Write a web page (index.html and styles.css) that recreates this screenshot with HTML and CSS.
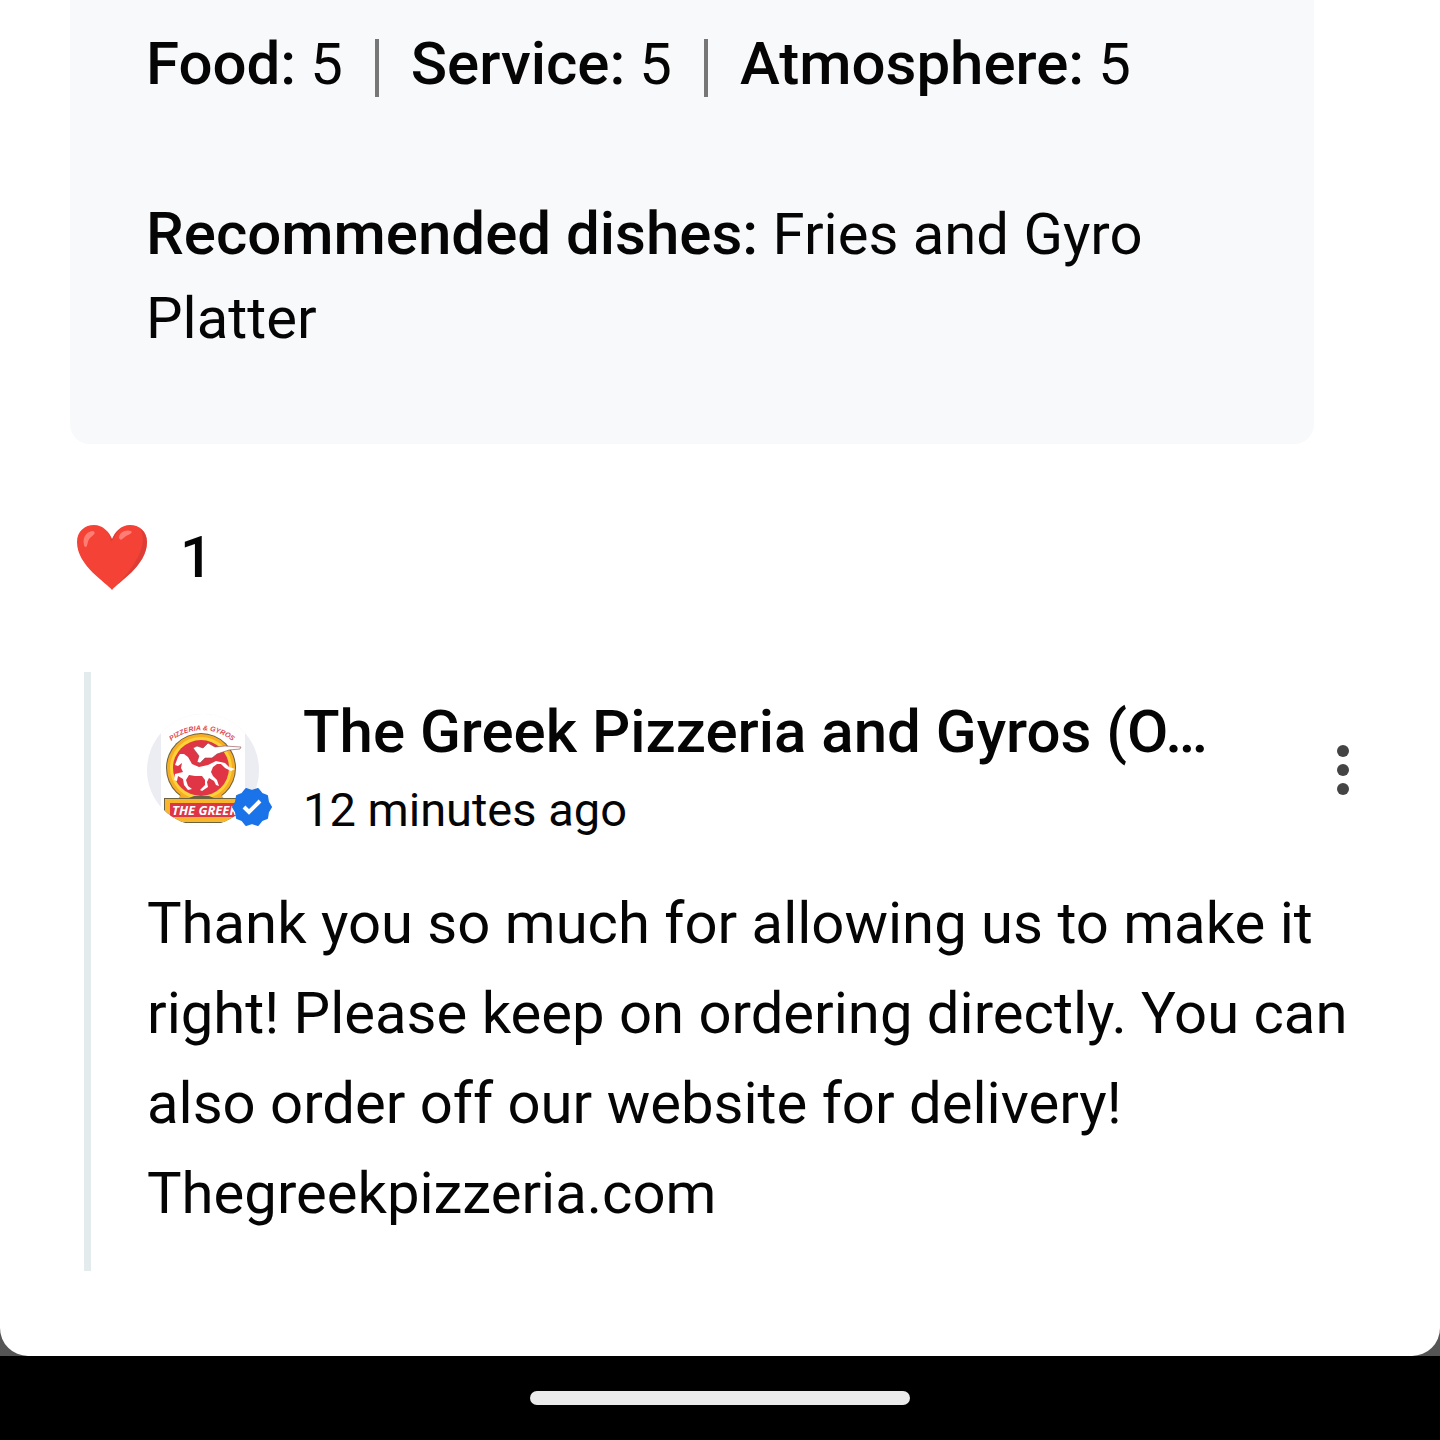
FILE: index.html
```html
<!DOCTYPE html>
<html lang="en">
<head>
  <meta charset="UTF-8" />
  <meta name="viewport" content="width=device-width, initial-scale=1" />
  <title>Review</title>
  <link rel="stylesheet" href="styles.css">
</head>
<body>
  <div class="backdrop">
    <main class="sheet">
      <section class="review-card">
        <ul class="ratings">
          <li><strong>Food:</strong> 5</li>
          <li><strong>Service:</strong> 5</li>
          <li><strong>Atmosphere:</strong> 5</li>
        </ul>
        <p class="dishes"><strong>Recommended dishes:</strong> Fries and Gyro Platter</p>
      </section>

      <button class="reaction" type="button" aria-label="1 like">
        <svg class="heart" viewBox="0 0 72 68" aria-hidden="true">
          <defs>
            <clipPath id="heartShape">
              <path d="M36 67C31 60 1 43 1 19C1 8 9 2 18 2C27 2 33 9 36 16C39 9 45 2 54 2C63 2 71 8 71 19C71 43 41 60 36 67Z" />
            </clipPath>
          </defs>
          <g clip-path="url(#heartShape)">
            <rect width="72" height="68" fill="#f44336" />
            <path d="M60 0C76 16 62 42 35 68H72V0Z" fill="#cf3b35" opacity=".6" />
            <path d="M25 3C31 6 34 12 35 19C39 14 42 7 48 2L36 -2Z" fill="#c33b35" opacity=".5" />
            <path d="M8 22C6 13 12 8 17 8C21 10 17 12 14 15C11 18 12 23 10 24C9 24 8 23 8 22Z" fill="#ff7d73" />
            <path d="M43 15C43 9 50 6 55 8C57 10 54 11 50 13C47 15 45 19 43 15Z" fill="#ff7d73" />
          </g>
        </svg>
        <span>1</span>
      </button>

      <article class="reply">
        <header class="reply-header">
          <div class="avatar">
            <svg class="logo" viewBox="0 0 112 112" role="img" aria-label="The Greek Pizzeria logo">
              <defs>
                <clipPath id="round"><circle cx="56" cy="56" r="56" /></clipPath>
                <path id="arc" d="M20 31A49 49 0 0 1 90 31" />
              </defs>
              <g clip-path="url(#round)">
                <rect width="112" height="112" fill="#ececf3" />
                <rect x="14" width="84" height="112" fill="#fff" />
                <text class="logo-arc"><textPath href="#arc" startOffset="50%">PIZZERIA &amp; GYROS</textPath></text>
                <circle cx="54" cy="54" r="35" fill="#6b6240" />
                <path d="M36 78L30 86H78L72 78Z" fill="#f5a623" />
                <circle cx="54" cy="54" r="34" fill="#f8ad25" />
                <circle cx="54" cy="54" r="31" fill="#fbd238" />
                <circle cx="54" cy="54" r="28" fill="#df3545" />
                <!-- winged horse -->
                <path d="M46 34L50 32L56 34L61 29L68 33L78 32L94 33L93 35L82 36L70 40L65 44L58 44L53 49L50 48L52 42Z" fill="#fff" stroke="#8d4248" stroke-width=".6" />
                <path d="M31 43L33 40L37 40L41 43L45 50L52 53L61 51L69 47L78 49L82 53L88 55L84 57L78 54L74 50L70 50L66 53L64 58L66 62L70 66L72 72L69 71L67 67L62 64L60 68L61 73L55 77L53 76L58 71L58 66L55 62L48 62L42 61L39 66L41 72L45 75L41 76L37 71L36 65L31 62L30 67L27 66L28 60L36 58L34 54L35 49L31 52L28 51Z" fill="#fff" />
                <path d="M17 84H42L47 82H62L67 84H99V109H17Z" fill="#6b6240" />
                <path d="M18 85H99V108H34L18 105Z" fill="#f9b52c" />
                <rect x="23" y="89" width="76" height="14" fill="#dd3545" />
                <text class="logo-name" x="25" y="101">THE GREEK</text>
              </g>
            </svg>
            <svg class="badge" viewBox="0 0 40 40" role="img" aria-label="Verified">
              <path d="M39 20L36 25L35 31L30 33L26 38L20 36L14 38L10 33L5 31L4 25L1 20L4 15L5 9L10 7L14 2L20 4L26 2L30 7L35 9L36 15Z" fill="#1a73e8" stroke="#1a73e8" stroke-width="2" stroke-linejoin="round" />
              <path d="M12 20L17 25L28 14" fill="none" stroke="#fff" stroke-width="4" />
            </svg>
          </div>
          <div class="author">
            <h2>The Greek Pizzeria and Gyros (O…</h2>
            <time>12 minutes ago</time>
          </div>
          <button class="more" type="button" aria-label="More options">
            <svg viewBox="0 0 14 52" aria-hidden="true">
              <circle cx="7" cy="7" r="6" />
              <circle cx="7" cy="26" r="6" />
              <circle cx="7" cy="45" r="6" />
            </svg>
          </button>
        </header>
        <p class="reply-text">Thank you so much for allowing us to make it right! Please keep on ordering directly. You can also order off our website for delivery! Thegreekpizzeria.com</p>
      </article>
    </main>
  </div>

  <footer class="nav-bar">
    <div class="home-pill"></div>
  </footer>
</body>
</html>
```

FILE: styles.css
```css
:root {
  --text-color: #050505;
  --card-color: #f8f9fb;
  --line-color: #e4ebed;
}
* {
  box-sizing: border-box;
}
body {
  margin: 0;
  font-family: Roboto, sans-serif;
  font-size: 58px;
  color: var(--text-color);
  background-color: #000;
}
h2,
p,
ul {
  margin: 0;
  padding: 0;
}
strong,
h2 {
  font-size: 60px;
  font-weight: 500;
}
button {
  border: none;
  padding: 0;
  background: none;
  font: inherit;
  color: inherit;
  cursor: pointer;
}
.backdrop {
  background-color: #555;
}
.sheet {
  background-color: #fff;
  border-radius: 0 0 28px 28px;
  padding: 0 70px 85px;
}
.review-card {
  background-color: var(--card-color);
  border-radius: 0 0 20px 20px;
  margin-right: 56px;
  padding: 22px 76px 84px;
  line-height: 84px;
}
.ratings {
  display: flex;
  list-style: none;
  margin-bottom: 86px;
}
.ratings li {
  display: flex;
  align-items: center;
  gap: 14px;
}
.ratings li + li::before {
  content: "";
  width: 4px;
  height: 58px;
  margin: 8px 18px 0 32px;
  background-color: #777;
}

/* Reaction */
.reaction {
  display: flex;
  align-items: center;
  gap: 32px;
  margin: 78px 0 80px 6px;
  height: 70px;
  font-weight: 500;
}
.heart {
  width: 72px;
  height: 68px;
}

/* Owner reply */
.reply {
  margin-left: 14px;
  padding: 28px 0 33px 56px;
  border-left: 7px solid var(--line-color);
}
.reply-header {
  display: flex;
  align-items: center;
  margin-bottom: 38px;
}
.avatar {
  position: relative;
  width: 112px;
  height: 112px;
  margin-right: 44px;
  flex: none;
}
.logo {
  display: block;
}
.logo-arc {
  font: italic 700 7px "Liberation Sans", sans-serif;
  fill: #dc4a55;
  text-anchor: middle;
}
.logo-name {
  font: italic 700 13px "Open Sans", sans-serif;
  fill: #fff;
}
.badge {
  position: absolute;
  right: -13px;
  bottom: -1px;
  width: 40px;
  height: 40px;
}
.author {
  flex: 1;
  min-width: 0;
}
.author h2 {
  line-height: 64px;
  white-space: nowrap;
}
.author time {
  display: block;
  margin-top: 16px;
  font-size: 47px;
  line-height: 60px;
}
.more svg {
  display: block;
  width: 14px;
  height: 52px;
  margin-right: 20px;
  fill: #444;
}
.reply-text {
  margin-right: -20px;
  line-height: 90px;
}

/* System navigation */
.nav-bar {
  display: flex;
  justify-content: center;
  padding: 35px 0;
  background-color: #000;
}
.home-pill {
  width: 380px;
  height: 14px;
  border-radius: 7px;
  background-color: #ebebeb;
}
```
